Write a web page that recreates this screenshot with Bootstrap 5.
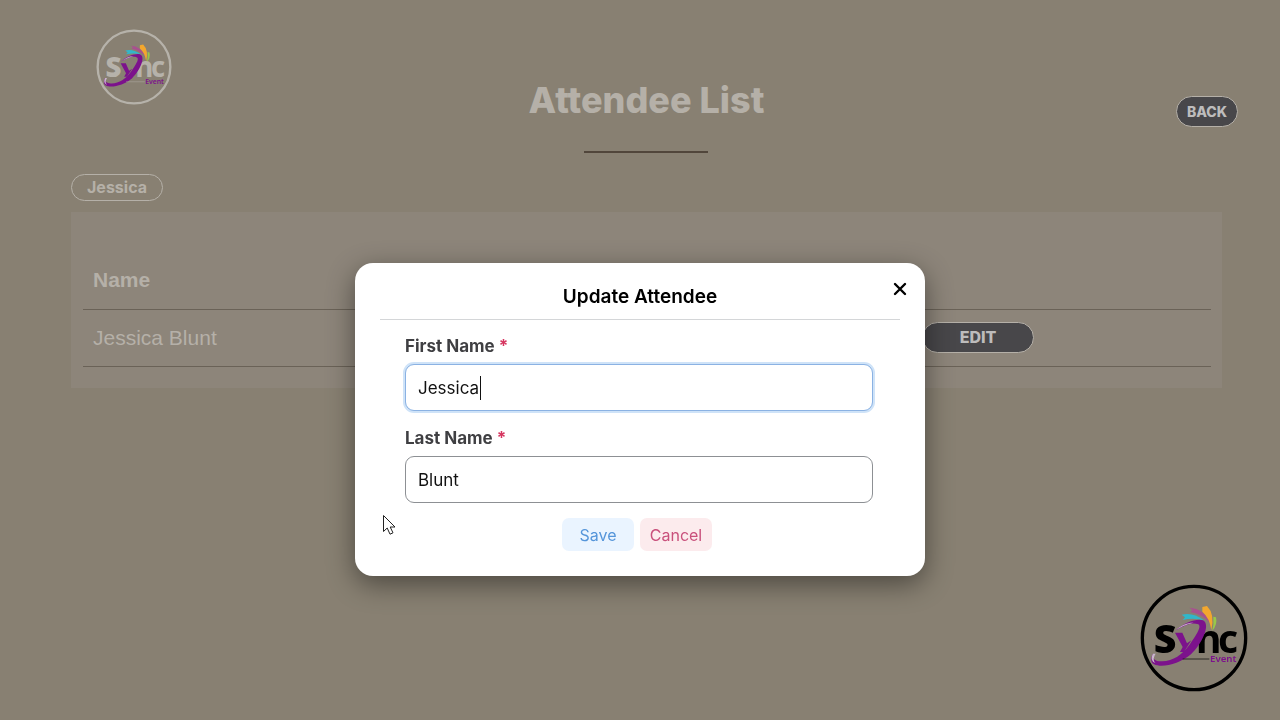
<!DOCTYPE html>
<html lang="en">
<head>
<meta charset="utf-8">
<meta name="viewport" content="width=device-width, initial-scale=1">
<title>Attendee List</title>
<link href="https://cdn.jsdelivr.net/npm/bootstrap@5.3.0/dist/css/bootstrap.min.css" rel="stylesheet">
<style>
  :root { --page: #888072; --panel: #8d857a; --light: #b5b0a8; --rule: #6a6257; --pill: #48474a; }
  body { background: var(--page); color: var(--light); font-family: Inter, sans-serif; }
  .page-wrap { padding: 29px 58px 0 71px; }
  .page-head { display: grid; grid-template-columns: 1fr auto 1fr; }
  .brand-logo { width: 76px; height: 76px; margin-left: 25px; }
  .brand-pale { color: #b6b2aa; }
  .page-title { font-size: 36px; line-height: 40px; font-weight: 800; margin: 51px 0 31px; }
  .title-rule { width: 124px; height: 2px; background: #51463b; }
  .pill-btn { background: var(--pill); border: 1px solid var(--light); border-radius: 16px; color: #bdbcbc; font-weight: 800; line-height: 21px; padding: 4px; }
  .pill-back { width: 62px; font-size: 14px; padding: 4px 0; margin-top: 67px; margin-right: -16px; }
  .pill-edit { width: 112px; font-size: 16px; font-family: Inter, sans-serif; }
  .filter-tag { border: 1px solid var(--light); border-radius: 14px; width: 92px; font-size: 16px; font-weight: 700; line-height: 25px; margin: 21px 0 11px; }
  .list-panel { background: var(--panel); padding: 40px 11px 21px 12px; }
  .attendees { --bs-table-bg: transparent; --bs-table-color: var(--light); color: var(--light); border-color: var(--rule); font: 21px/32px "Liberation Sans", sans-serif; table-layout: fixed; }
  .attendees th, .attendees td { padding: 12px 10px; border-bottom: 1px solid var(--rule); color: var(--light); vertical-align: middle; height: 57px; }
  .attendees td { padding-top: 8px; padding-bottom: 8px; }
  .edit-dialog { max-width: 570px; margin: 263px auto 20px; }
  .edit-dialog .modal-content { border: 0; border-radius: 18px; color: #000; padding: 16px 25px 25px; box-shadow: 0 8px 28px rgba(0,0,0,.45); }
  .dialog-title { font-size: 19px; line-height: 36px; font-weight: 600; text-align: center; padding-bottom: 4px; border-bottom: 1px solid #d4d6d8; }
  .close-x { top: 16px; right: 15px; width: 20px; height: 20px; }
  .dialog-form { padding: 14px 27px 0 25px; }
  .dialog-form label { display: block; color: #3f3f42; font-size: 17px; line-height: 24px; font-weight: 700; margin-bottom: 6px; }
  .req { color: #d63660; }
  .dialog-form .form-control { height: 47px; border: 1px solid #8d9094; border-radius: 9px; font-size: 17px; padding: 8px 12px; color: #111; margin-bottom: 15px; }
  .dialog-form .is-active { border-color: #8bb2e3; box-shadow: 0 0 0 2px #cfe3f8; }
  .caret { left: 75px; top: 12px; width: 1px; height: 24px; background: #111; }
  .dialog-actions { gap: 6px; margin-right: 4px; }
  .soft-btn { width: 72px; height: 33px; border: 0; border-radius: 7px; font-size: 16px; padding: 0; }
  .soft-save { background: #eaf4ff; color: #5595da; }
  .soft-cancel { background: #fcebed; color: #c9517c; }
  .pointer { left: 27px; top: 251px; }
  .corner-logo { right: 32px; bottom: 28px; width: 108px; height: 108px; color: #000; z-index: 1060; }
</style>
</head>
<body>
<svg width="0" height="0" class="position-absolute" aria-hidden="true">
  <symbol id="sync-logo" viewBox="30 25 324 324">
    <circle cx="192" cy="187" r="155" fill="none" stroke="currentColor" stroke-width="10"/>
    <g fill="currentColor" font-family="Open Sans, sans-serif" font-weight="800" font-size="118">
      <text x="71" y="231">S</text>
      <text x="197" y="231" font-weight="700">n</text>
      <text x="264" y="231" font-weight="700">c</text>
    </g>
    <path d="M155 117Q188 108 222 134Q190 125 158 133L165 125Z" fill="#31b7c9"/>
    <path d="M178 96Q222 98 240 142Q216 115 181 109L188 103Z" fill="#a9508f"/>
    <path d="M217 94L231 91Q255 115 244 163Q239 127 217 108Z" fill="#f3a72e"/>
    <path d="M250 123L258 125Q263 148 247 165Q252 143 250 123Z" fill="#98c849"/>
    <path d="M135 171H157L171 203L184 194L162 229H150L158 214Z" fill="#7c128c"/>
    <path d="M137 164C164 139 203 127 219 134C244 147 214 207 183 236C149 265 96 278 72 266C61 260 62 245 69 234C67 249 76 258 96 257C130 256 157 237 178 208C199 178 219 149 202 145C187 139 164 148 137 164Z" fill="#7c128c"/>
    <path d="M138 163C156 147 175 140 191 141C177 144 159 150 138 163ZM69 234C62 247 64 257 77 263C69 255 70 245 77 234Z" fill="#c9b4cd"/>
    <text x="240" y="260" font-family="Noto Sans, sans-serif" font-weight="600" font-size="29" fill="#7c128c">Event</text>
    <path d="M158 250H238" stroke="currentColor" stroke-width="2"/>
  </symbol>
</svg>

<div class="page-wrap">
  <header class="page-head align-items-start">
    <svg class="brand-logo brand-pale" role="img" aria-label="Sync Event"><use href="#sync-logo"/></svg>
    <div class="d-flex flex-column align-items-center">
      <h1 class="page-title">Attendee List</h1>
      <div class="title-rule"></div>
    </div>
    <button type="button" class="pill-btn pill-back ms-auto">BACK</button>
  </header>
  <main>
    <div class="filter-tag text-center">Jessica</div>
    <section class="list-panel">
      <table class="table attendees mb-0">
        <colgroup><col style="width:58.7%"><col></colgroup>
        <thead><tr><th scope="col">Name</th><td></td></tr></thead>
        <tbody><tr><td>Jessica Blunt</td><td class="text-center"><button type="button" class="pill-btn pill-edit d-block mx-auto">EDIT</button></td></tr></tbody>
      </table>
    </section>
  </main>
</div>

<div class="modal d-block" role="dialog" aria-labelledby="dialogTitle">
  <div class="modal-dialog edit-dialog">
    <div class="modal-content">
      <h2 id="dialogTitle" class="dialog-title mb-0">Update Attendee</h2>
      <button type="button" class="close-x btn p-0 border-0 position-absolute d-flex" aria-label="Close">
        <svg width="20" height="20" viewBox="0 0 20 20"><path d="M5 5L15 15M15 5L5 15" stroke="#000" stroke-width="2.4" stroke-linecap="round"/></svg>
      </button>
      <form class="dialog-form">
        <label for="firstName">First Name <span class="req">*</span></label>
        <div class="position-relative">
          <input id="firstName" type="text" class="form-control is-active" value="Jessica">
          <span class="caret position-absolute"></span>
        </div>
        <label for="lastName">Last Name <span class="req">*</span></label>
        <input id="lastName" type="text" class="form-control" value="Blunt">
        <div class="dialog-actions d-flex justify-content-center">
          <button type="button" class="soft-btn soft-save">Save</button>
          <button type="button" class="soft-btn soft-cancel">Cancel</button>
        </div>
      </form>
      <svg class="pointer position-absolute" width="15" height="22" viewBox="0 0 15 22"><path d="M1.5 1.5V17.5L5.2 14L8 20.2L11 18.8L8.200 13H13Z" fill="#fff" stroke="#222" stroke-width="1"/></svg>
    </div>
  </div>
</div>
<svg class="corner-logo position-fixed" role="img" aria-label="Sync Event"><use href="#sync-logo"/></svg>
<script src="https://cdn.jsdelivr.net/npm/bootstrap@5.3.0/dist/js/bootstrap.bundle.min.js"></script>
</body>
</html>
